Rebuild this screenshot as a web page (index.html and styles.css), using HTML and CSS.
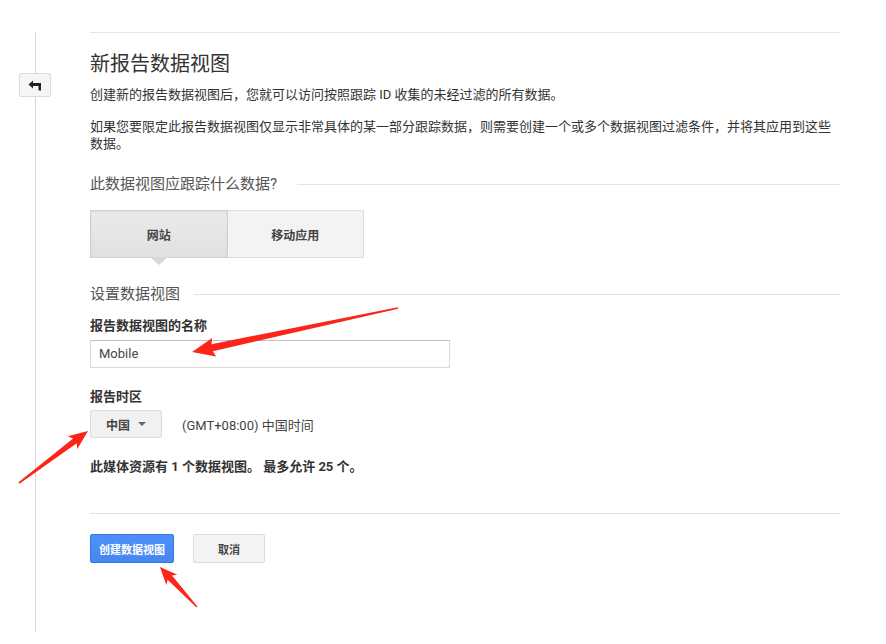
FILE: index.html
```html
<!DOCTYPE html>
<html lang="zh-CN">
<head>
<meta charset="utf-8">
<title>新报告数据视图</title>
<link rel="stylesheet" href="styles.css">
</head>
<body>
<div class="page">
  <div class="rail">
    <button class="back-btn" type="button" aria-label="返回">
      <svg width="14" height="11" viewBox="0 0 14 11"><path d="M0.5 4.5 L5 0.5 L5 3 L13 3 L13 10.5 L10.5 10.5 L10.5 6 L5 6 L5 8.5 Z" fill="#222"/></svg>
    </button>
  </div>
  <main class="main">
    <h1 class="title">新报告数据视图</h1>
    <p class="para first">创建新的报告数据视图后，您就可以访问按照跟踪 ID 收集的未经过滤的所有数据。</p>
    <p class="para second">如果您要限定此报告数据视图仅显示非常具体的某一部分跟踪数据，则需要创建一个或多个数据视图过滤条件，并将其应用到这些数据。</p>

    <div class="section-head track-head"><span>此数据视图应跟踪什么数据?</span><span class="rule"></span></div>
    <div class="toggle">
      <button class="toggle-btn selected" type="button">网站</button>
      <button class="toggle-btn" type="button">移动应用</button>
    </div>

    <div class="section-head setup-head"><span>设置数据视图</span><span class="rule"></span></div>
    <div class="label name-label">报告数据视图的名称</div>
    <div class="input">Mobile</div>

    <div class="label tz-label">报告时区</div>
    <div class="tz-row">
      <button class="dropdown" type="button">中国 <span class="caret"></span></button>
      <span class="tz-text">(GMT+08:00) 中国时间</span>
    </div>
    <div class="label info">此媒体资源有 1 个数据视图。 最多允许 25 个。</div>

    <div class="divider"></div>
    <div class="actions">
      <button class="btn primary" type="button">创建数据视图</button>
      <button class="btn cancel" type="button">取消</button>
    </div>
  </main>
</div>
<svg class="annotations" width="886" height="644" viewBox="0 0 886 644">
  <g fill="#fb2519">
    <polygon transform="translate(398 308) rotate(167.94)" points="0,-0.8 190,-3.6 188,-9.5 210.6,0 188,9.5 190,3.6 0,0.8"/>
    <polygon transform="translate(19 483) rotate(-37)" points="0,-0.8 70,-3 67,-8 86.4,0 67,8 70,3 0,0.8"/>
    <polygon transform="translate(197 607) rotate(-132.8)" points="0,-0.6 40,-3 37,-7.5 54.5,0 37,7.5 40,3 0,0.6"/>
  </g>
</svg>
</body>
</html>
```
FILE: styles.css
```css
* { box-sizing: border-box; }
html, body { margin: 0; padding: 0; background: #fff; }
body {
  font-family: Roboto, "Noto Sans CJK SC", sans-serif;
  color: #333;
  font-size: 13px;
  width: 886px;
  height: 644px;
  overflow: hidden;
  position: relative;
}
.page {
  display: flex;
  padding-top: 32px;
  min-height: 644px;
}
.rail {
  width: 90px;
  flex: none;
  position: relative;
}
.rail::before {
  content: "";
  position: absolute;
  left: 35px;
  top: 0;
  height: 600px;
  border-left: 1px solid #d6d6d6;
}
.back-btn {
  position: relative;
  display: flex;
  align-items: center;
  justify-content: center;
  margin: 41px 0 0 19px;
  width: 32px;
  height: 24px;
  padding: 0;
  background: #f5f5f5;
  border: 1px solid #dcdcdc;
  border-radius: 2px;
}
.main {
  width: 750px;
  border-top: 1px solid #e5e5e5;
  padding-top: 19px;
}
.title {
  margin: 0;
  font-size: 20px;
  line-height: 24px;
  font-weight: 400;
  color: #333;
}
.para {
  margin: 0;
  line-height: 17px;
  font-size: 13px;
  color: #333;
}
.para.first { margin-top: 10px; }
.para.second { margin-top: 15px; }
.section-head {
  display: flex;
  align-items: center;
  gap: 20px;
  font-size: 15px;
  line-height: 20px;
  color: #555;
}
.section-head .rule {
  flex: 1;
  border-top: 1px solid #e2e2e2;
}
.track-head { margin-top: 22px; }
.setup-head { margin-top: 26px; gap: 14px; }
.toggle {
  display: flex;
  margin-top: 16px;
  width: 274px;
  height: 48px;
}
.toggle-btn {
  flex: 1;
  font-family: inherit;
  font-size: 12px;
  font-weight: 700;
  color: #444;
  background: #f3f3f3;
  border: 1px solid #dcdcdc;
  padding: 0;
  position: relative;
}
.toggle-btn + .toggle-btn { border-left: none; }
.toggle-btn.selected {
  background: linear-gradient(#ebebeb, #e0e0e0);
  border-color: #d0d0d0;
  box-shadow: inset 0 1px 2px rgba(0,0,0,0.08);
}
.toggle-btn.selected::after {
  content: "";
  position: absolute;
  left: 50%;
  top: 100%;
  margin-left: -9px;
  border-left: 9px solid transparent;
  border-right: 9px solid transparent;
  border-top: 8px solid #d8d8d8;
}
.label {
  font-weight: 700;
  font-size: 13px;
  line-height: 17px;
  color: #333;
}
.name-label { margin-top: 13px; }
.input {
  margin-top: 6px;
  width: 360px;
  height: 28px;
  border: 1px solid #d9d9d9;
  border-top-color: #c0c0c0;
  padding: 0 8px;
  line-height: 26px;
  color: #444;
  font-size: 13px;
}
.tz-label { margin-top: 20px; }
.tz-row {
  display: flex;
  align-items: center;
  margin-top: 5px;
}
.dropdown {
  width: 72px;
  height: 28px;
  background: #f1f1f1;
  border: 1px solid #dcdcdc;
  border-radius: 2px;
  font-family: inherit;
  font-size: 12px;
  font-weight: 700;
  color: #444;
  padding: 0;
  display: flex;
  align-items: center;
  justify-content: center;
  gap: 8px;
}
.caret {
  width: 0;
  height: 0;
  border-left: 4px solid transparent;
  border-right: 4px solid transparent;
  border-top: 4px solid #666;
}
.tz-text {
  margin-left: 20px;
  color: #444;
}
.info { margin-top: 20px; }
.divider {
  margin-top: 38px;
  border-top: 1px solid #e2e2e2;
}
.actions {
  display: flex;
  gap: 19px;
  margin-top: 20px;
}
.btn {
  height: 29px;
  font-family: inherit;
  font-size: 11px;
  font-weight: 700;
  border-radius: 2px;
  padding: 0;
}
.btn.primary {
  width: 84px;
  color: #fff;
  background: linear-gradient(#4d90fe, #4787ed);
  border: 1px solid #3079ed;
}
.btn.cancel {
  width: 72px;
  color: #444;
  background: #f3f3f3;
  border: 1px solid #dcdcdc;
}
.annotations {
  position: absolute;
  left: 0;
  top: 0;
  pointer-events: none;
}
```
